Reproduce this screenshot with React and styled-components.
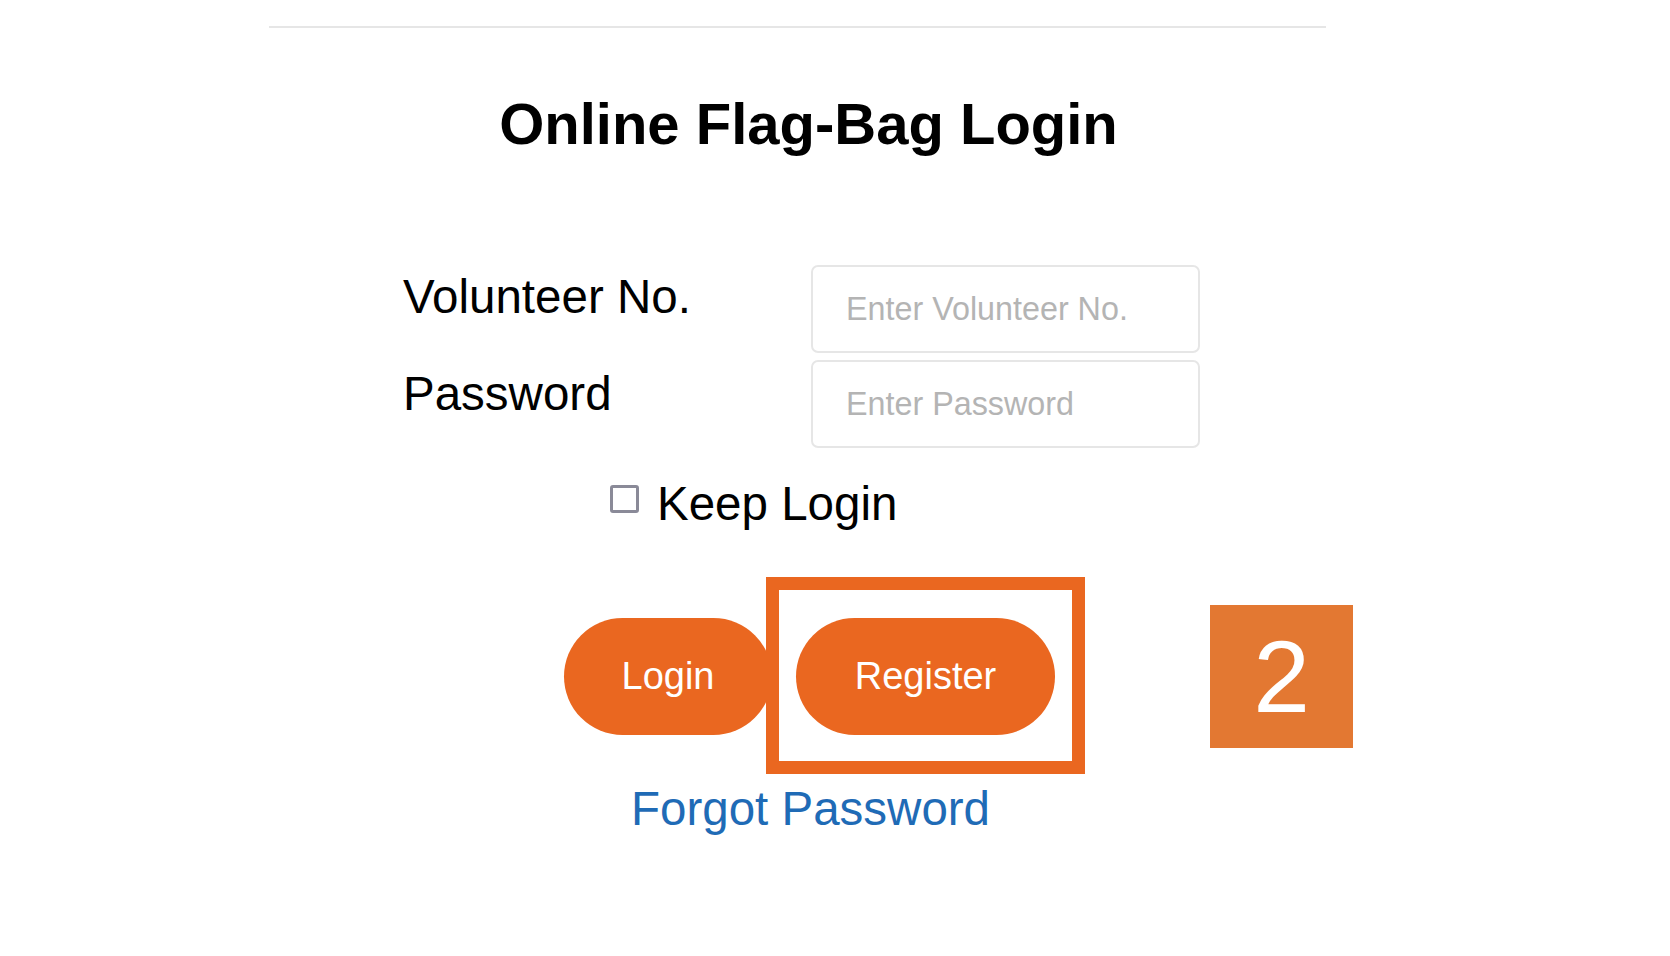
import React from "react";
import styled, { createGlobalStyle } from "styled-components";

const GlobalStyle = createGlobalStyle`
  body {
    margin: 0;
    background: #fff;
    font-family: "Liberation Sans", Arial, sans-serif;
    color: #000;
  }
`;

const Page = styled.div`
  width: 1057px;
  margin-left: 269px;
  padding-top: 26px;
  height: 930px;
`;

const Rule = styled.div`
  border-top: 2px solid #e6e6e6;
`;

const Title = styled.h1`
  margin: 64px 0 0;
  padding-left: 22px;
  text-align: center;
  font-size: 58px;
  line-height: 64px;
  font-weight: bold;
`;

const Form = styled.div`
  display: grid;
  grid-template-columns: 408px 389px;
  row-gap: 7px;
  margin: 109px 0 0 134px;
`;

const Label = styled.label`
  padding-top: ${(p) => p.offset}px;
  font-size: 47.5px;
  line-height: 46px;
`;

const Field = styled.input`
  box-sizing: border-box;
  width: 389px;
  height: 88px;
  padding: 0 0 0 33px;
  border: 2px solid #e6e6e6;
  border-radius: 7px;
  font-family: inherit;
  font-size: 32.3px;
  outline: none;

  &::placeholder {
    color: #b4b4b4;
  }
`;

const KeepRow = styled.div`
  display: flex;
  align-items: flex-start;
  gap: 18px;
  margin: 33px 0 0 341px;
  font-size: 47.5px;
  line-height: 46px;
`;

const Check = styled.input`
  appearance: none;
  box-sizing: border-box;
  width: 29px;
  height: 28px;
  margin: 4px 0 0;
  border: 3px solid #8a8a98;
  border-radius: 3px;
  background: #fff;
`;

const Buttons = styled.div`
  display: flex;
  gap: 24px;
  margin: 91px 0 0 295px;
`;

const Pill = styled.button`
  height: 117px;
  min-width: ${(p) => p.width}px;
  padding: 0 40px;
  border: none;
  border-radius: 59px;
  background: #ea6720;
  color: #fff;
  font-family: inherit;
  font-size: 38px;
`;

const Highlight = styled.div`
  position: relative;
`;

const Frame = styled.div`
  position: absolute;
  top: -41px;
  bottom: -39px;
  left: -30px;
  right: -30px;
  border: 13px solid #ea6720;
  pointer-events: none;
`;

const Badge = styled.div`
  position: absolute;
  top: -13px;
  left: calc(100% + 155px);
  width: 143px;
  height: 143px;
  display: flex;
  align-items: center;
  justify-content: center;
  background: #e37832;
  color: #fff;
  font-size: 102px;
  line-height: 1;
`;

const Forgot = styled.a`
  display: block;
  margin: 51px 0 0 362px;
  color: #1f6bb6;
  font-size: 47.5px;
  line-height: 46px;
  text-decoration: none;
`;

export default function App() {
  return (
    <>
      <GlobalStyle />
      <Page>
        <Rule />
        <Title>Online Flag-Bag Login</Title>
        <Form>
          <Label offset={9}>Volunteer No.</Label>
          <Field placeholder="Enter Volunteer No." />
          <Label offset={11}>Password</Label>
          <Field type="password" placeholder="Enter Password" />
        </Form>
        <KeepRow>
          <Check type="checkbox" />
          <span>Keep Login</span>
        </KeepRow>
        <Buttons>
          <Pill width={208}>Login</Pill>
          <Highlight>
            <Pill width={259}>Register</Pill>
            <Frame />
            <Badge>2</Badge>
          </Highlight>
        </Buttons>
        <Forgot href="#">Forgot Password</Forgot>
      </Page>
    </>
  );
}
